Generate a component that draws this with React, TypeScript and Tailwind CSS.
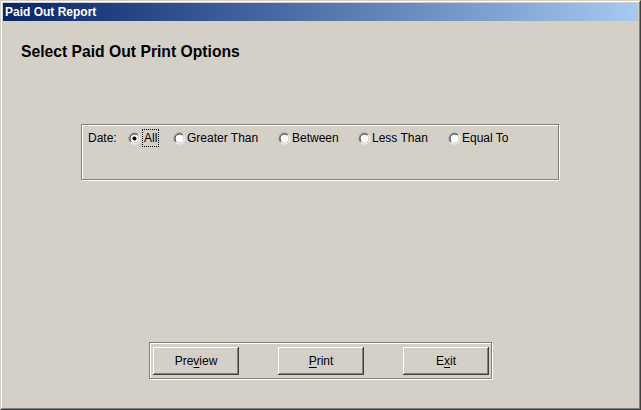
import React from "react";

function Radio({ checked }: { checked?: boolean }) {
  // classic sunken radio, two halves per ring
  const arc = (r: number) => {
    const c = 6.5;
    const d = r * 0.7071;
    return {
      tl: `M ${c - d} ${c + d} A ${r} ${r} 0 0 1 ${c + d} ${c - d}`,
      br: `M ${c + d} ${c - d} A ${r} ${r} 0 0 1 ${c - d} ${c + d}`,
    };
  };
  const outer = arc(5.5);
  const inner = arc(4.5);
  return (
    <svg width="13" height="13" viewBox="0 0 13 13" className="shrink-0">
      <circle cx="6.5" cy="6.5" r="4.2" fill="#fff" />
      <path d={outer.tl} stroke="#808080" strokeWidth="1" fill="none" />
      <path d={outer.br} stroke="#fff" strokeWidth="1" fill="none" />
      <path d={inner.tl} stroke="#404040" strokeWidth="1" fill="none" />
      <path d={inner.br} stroke="#d4d0c8" strokeWidth="1" fill="none" />
      {checked && <circle cx="6.5" cy="6.5" r="2" fill="#000" />}
    </svg>
  );
}

function Btn({ pre, u, post }: { pre: string; u: string; post: string }) {
  return (
    <div className="w-[86px] h-[28px] flex items-center justify-center bg-[#d4d0c8] shadow-[inset_-1px_-1px_#404040,inset_1px_1px_#ffffff,inset_-2px_-2px_#808080,inset_2px_2px_#d4d0c8] text-[12px] leading-[14px] text-black">
      {pre}
      <span className="underline underline-offset-2">{u}</span>
      {post}
    </div>
  );
}

export default function App() {
  const opts = [
    { label: "Greater Than", w: "w-[105px]" },
    { label: "Between", w: "w-[80px]" },
    { label: "Less Than", w: "w-[90px]" },
    { label: "Equal To", w: "w-[90px]" },
  ];
  return (
    <div
      className="w-[641px] h-[410px] border border-t-[#d4d0c8] border-l-[#d4d0c8] border-r-[#404040] border-b-[#404040] bg-[#d4d0c8]"
      style={{ fontFamily: '"Liberation Sans", Arial, sans-serif' }}
    >
      <div className="h-full border border-t-white border-l-white border-r-[#808080] border-b-[#808080] p-[1px] flex flex-col">
        <div className="h-[18px] shrink-0 bg-gradient-to-r from-[#0a246a] to-[#a6caf0] px-[2px] text-white font-bold text-[12px] leading-[18px]">
          Paid Out Report
        </div>

        <div className="flex-1 flex flex-col">
          <div className="mt-[22px] ml-[18px] text-[15.7px] leading-[18px] font-bold text-black">
            Select Paid Out Print Options
          </div>

          <div className="mt-[63px] ml-[78px] w-[478px] h-[56px] border border-[#808080] shadow-[inset_1px_1px_#ffffff,1px_1px_#ffffff] pt-[5px] pl-[6px]">
            <div className="flex items-center h-[16px] text-[12px] leading-[14px] text-black">
              <span className="w-[40px]">Date:</span>
              <div className="w-[45px] flex items-center">
                <Radio checked />
                <span className="ml-[1px] border border-dotted border-black px-[1px] py-[1px]">All</span>
              </div>
              {opts.map((o) => (
                <div key={o.label} className={`${o.w} flex items-center`}>
                  <Radio />
                  <span className="ml-[1px]">{o.label}</span>
                </div>
              ))}
            </div>
          </div>

          <div className="mt-[162px] ml-[146px] w-[343px] h-[37px] border border-[#808080] shadow-[inset_1px_1px_#ffffff,1px_1px_#ffffff] flex items-center pl-[3px] gap-[39px]">
            <Btn pre="Pre" u="v" post="iew" />
            <Btn pre="" u="P" post="rint" />
            <Btn pre="E" u="x" post="it" />
          </div>
        </div>
      </div>
    </div>
  );
}
